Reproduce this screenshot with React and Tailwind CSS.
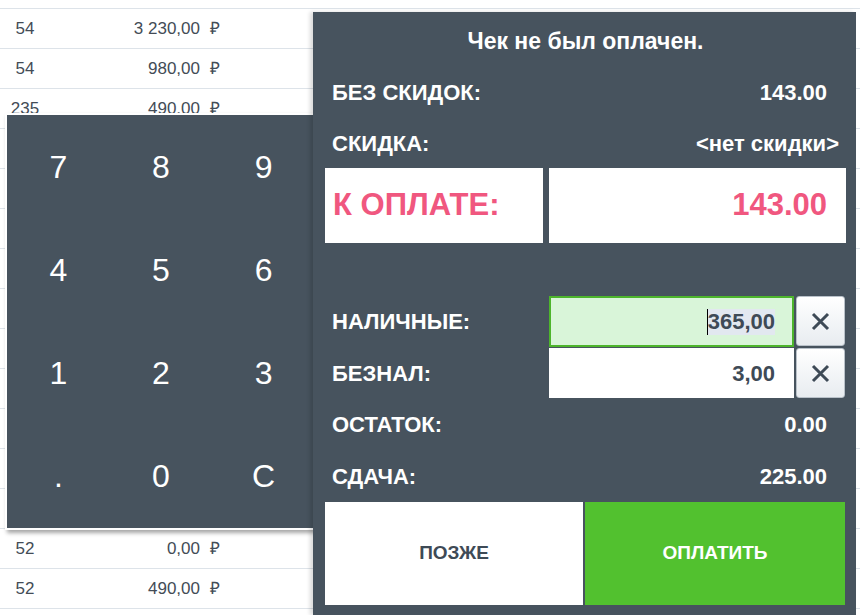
import React from 'react'

const rows = [
    { id: '', sum: '' },
    { id: '54', sum: '3 230,00' },
    { id: '54', sum: '980,00' },
    { id: '235', sum: '490,00' },
    { id: '52', sum: '1 150,00' },
    { id: '52', sum: '490,00' },
    { id: '54', sum: '320,00' },
    { id: '235', sum: '2 100,00' },
    { id: '52', sum: '490,00' },
    { id: '54', sum: '780,00' },
    { id: '52', sum: '90,00' },
    { id: '235', sum: '490,00' },
    { id: '54', sum: '1 230,00' },
    { id: '54', sum: '640,00' },
    { id: '52', sum: '0,00' },
    { id: '52', sum: '490,00' },
]

const keys = ['7', '8', '9', '4', '5', '6', '1', '2', '3', '.', '0', 'C']

const ClearIcon = () => (
    <svg width="19" height="19" viewBox="0 0 19 19" className="text-[#3e4a56]">
        <path d="M2 2 L17 17 M17 2 L2 17" stroke="currentColor" strokeWidth="3" strokeLinecap="butt" />
    </svg>
)

const Row = ({ label, value, valueClass = 'pr-[19px]', height }) => (
    <div className={`flex items-center justify-between pl-[7px] ${height}`}>
        <span>{label}</span>
        <span className={valueClass}>{value}</span>
    </div>
)

export default function App() {
    return (
        <div className="relative w-[860px] h-[615px] overflow-hidden bg-white font-['Liberation_Sans',Arial,sans-serif]">
            {/* background table */}
            <div className="-mt-[31px] text-[17px] text-[#434c56]">
                {rows.map((r, i) => (
                    <div key={i} className="flex items-center h-[40px] border-b border-[#dde3e9]">
                        <span className="w-[50px] text-center">{r.id}</span>
                        <span className="w-[150px] text-right">{r.sum}</span>
                        {r.sum && <span className="ml-[10px]">₽</span>}
                    </div>
                ))}
            </div>

            {/* numpad popup */}
            <div className="absolute left-[5px] top-[113px] w-[312px] h-[417px] border-2 border-white bg-[#47535e] shadow-[2px_3px_4px_rgba(0,0,0,0.35)] grid grid-cols-3 grid-rows-4 text-white text-[32px]">
                {keys.map(k => (
                    <button key={k} className="flex items-center justify-center">{k}</button>
                ))}
            </div>

            {/* payment panel */}
            <div className="absolute left-[313px] top-[12px] w-[543px] bottom-0 bg-[#47535e] shadow-[-3px_0_4px_rgba(0,0,0,0.15)] pl-[12px] pr-[10px] flex flex-col text-white font-bold text-[22px]">
                <div className="h-[55px] pt-[3px] flex items-center justify-center text-[23px]">Чек не был оплачен.</div>
                <Row label="БЕЗ СКИДОК:" value="143.00" height="h-[51px]" />
                <Row label="СКИДКА:" value="<нет скидки>" valueClass="pr-[7px]" height="h-[50px]" />

                <div className="h-[75px] flex gap-[6px] text-[#f0577f] text-[31px]">
                    <div className="w-[218px] bg-white flex items-center pl-[8px]">К ОПЛАТЕ:</div>
                    <div className="flex-1 bg-white flex items-center justify-end pr-[19px]">143.00</div>
                </div>

                <div className="h-[53px]" />

                <div className="h-[51px] flex">
                    <div className="w-[224px] flex items-center pl-[7px]">НАЛИЧНЫЕ:</div>
                    <div className="w-[245px] border-2 border-[#4db52c] bg-[#d9f5d9] flex items-center justify-end pr-[17px] text-[#3e4a56]">
                        <span className="border-l border-black bg-[#e2e8f0] leading-[26px]">365,00</span>
                    </div>
                    <button className="ml-[2px] w-[49px] h-[50px] rounded-[3px] border border-[#b9c1c9] bg-gradient-to-b from-white to-[#e8ecf0] flex items-center justify-center">
                        <ClearIcon />
                    </button>
                </div>
                <div className="h-[50px] mt-[1px] flex">
                    <div className="w-[224px] flex items-center pl-[7px]">БЕЗНАЛ:</div>
                    <div className="w-[245px] bg-white flex items-center justify-end pr-[19px] text-[#3e4a56]">3,00</div>
                    <button className="ml-[2px] w-[49px] h-[50px] rounded-[3px] border border-[#b9c1c9] bg-gradient-to-b from-white to-[#e8ecf0] flex items-center justify-center">
                        <ClearIcon />
                    </button>
                </div>

                <Row label="ОСТАТОК:" value="0.00" height="h-[52px]" />
                <Row label="СДАЧА:" value="225.00" height="h-[52px]" />

                <div className="h-[103px] flex gap-[2px] text-[19px]">
                    <button className="w-[258px] bg-white text-[#3e4a56]">ПОЗЖЕ</button>
                    <button className="w-[260px] bg-[#52c12f] text-white">ОПЛАТИТЬ</button>
                </div>
            </div>
        </div>
    )
}
